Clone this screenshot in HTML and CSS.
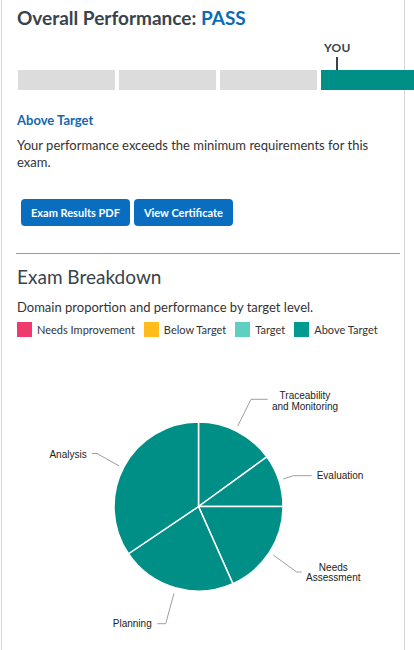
FILE: index.html
```html
<!DOCTYPE html>
<html>
<head>
<meta charset="utf-8">
<link rel="stylesheet" href="styles.css">
</head>
<body>
<div class="card">
  <h1 class="title">Overall Performance: <span class="pass">PASS</span></h1>
  <div class="meter">
    <div class="marker"><span class="you">YOU</span><span class="tick"></span></div>
    <div class="seg"></div>
    <div class="seg"></div>
    <div class="seg"></div>
    <div class="seg on"></div>
  </div>
  <h2 class="level">Above Target</h2>
  <p class="desc">Your performance exceeds the minimum requirements for this exam.</p>
  <div class="actions">
    <button class="btn">Exam Results PDF</button>
    <button class="btn">View Certificate</button>
  </div>
  <hr class="rule">
  <h2 class="section">Exam Breakdown</h2>
  <p class="sub">Domain proportion and performance by target level.</p>
  <ul class="legend">
    <li><span class="sw ni"></span>Needs Improvement</li>
    <li><span class="sw bt"></span>Below Target</li>
    <li><span class="sw tg"></span>Target</li>
    <li><span class="sw at"></span>Above Target</li>
  </ul>
  <svg class="chart" width="404" height="300" viewBox="0 0 404 300">
    <g class="slices">
      <path d="M197.5 156.5 L197.5 72 A84.5 84.5 0 0 1 265.86 106.83 Z"/>
      <path d="M197.5 156.5 L265.86 106.83 A84.5 84.5 0 0 1 282 156.5 Z"/>
      <path d="M197.5 156.5 L282 156.5 A84.5 84.5 0 0 1 231.87 233.69 Z"/>
      <path d="M197.5 156.5 L231.87 233.69 A84.5 84.5 0 0 1 127.45 203.75 Z"/>
      <path d="M197.5 156.5 L127.45 203.75 A84.5 84.5 0 0 1 197.5 72 Z"/>
    </g>
    <g class="leaders">
      <polyline points="236.7,76 250,49.3 266.7,49.3"/>
      <polyline points="91,103.5 96,103.5 118.3,116"/>
      <polyline points="282.3,129 292.3,125.7 310.7,125.7"/>
      <polyline points="272.3,205 295.7,222 300.7,222"/>
      <polyline points="156.3,273.7 164.7,273.7 173,243.3"/>
    </g>
    <g class="labels">
      <text x="304" y="48.5" text-anchor="middle">Traceability</text>
      <text x="304" y="60" text-anchor="middle">and Monitoring</text>
      <text x="85.7" y="107.5" text-anchor="end">Analysis</text>
      <text x="315.7" y="129.3">Evaluation</text>
      <text x="332.3" y="220.5" text-anchor="middle">Needs</text>
      <text x="332.3" y="231.3" text-anchor="middle">Assessment</text>
      <text x="150.7" y="276.5" text-anchor="end">Planning</text>
    </g>
  </svg>
</div>
</body>
</html>
```
FILE: styles.css
```css
html, body {
  margin: 0;
  padding: 0;
  background: #fff;
}
body {
  font-family: Lato, "Open Sans", sans-serif;
  color: #333;
  overflow: hidden;
}
.card {
  margin-left: 1px;
  width: 404px;
  box-sizing: border-box;
  min-height: 650px;
  border-left: 1px solid #d6d6d6;
  border-right: 1px solid #d6d6d6;
  padding: 6px 15px 0 15px;
}
.title {
  margin: 0;
  font-size: 19px;
  line-height: 24px;
  font-weight: 700;
  color: #39434b;
}
.pass { color: #0b6cb5; }
.meter {
  display: grid;
  grid-template-columns: 97px 97px 97px 97px;
  grid-template-rows: auto 20px;
  column-gap: 4px;
  margin: 11px 0 0 1px;
  width: 400px;
}
.marker {
  grid-column: 4;
  grid-row: 1;
  display: flex;
  flex-direction: column;
  align-items: flex-start;
  margin-left: 3px;
}
.you {
  font-size: 12px;
  font-weight: 700;
  line-height: 14px;
  color: #39434b;
  letter-spacing: 0.3px;
}
.tick {
  width: 2px;
  height: 13px;
  margin: 2px 0 0 12px;
  background: #39434b;
}
.seg { grid-row: 2; background: #dcdcdc; }
.seg.on { background: #008f86; }
.level {
  margin: 22px 0 0;
  font-size: 13px;
  line-height: 16px;
  font-weight: 700;
  color: #1467ad;
}
.desc {
  margin: 9px 0 0;
  font-size: 13px;
  line-height: 17px;
  color: #333;
}
.actions {
  display: flex;
  gap: 4px;
  margin: 28px 0 0 4px;
}
.btn {
  border: 0;
  border-radius: 4px;
  background: #0a6ec0;
  color: #fff;
  font-family: Lato, "Open Sans", sans-serif;
  font-size: 11px;
  font-weight: 700;
  height: 27px;
  padding: 0 10px;
  margin: 0;
}
.rule {
  border: 0;
  border-top: 1px solid #9a9a9a;
  margin: 27px 0 0 -1px;
  width: 384px;
  height: 0;
}
.section {
  margin: 11px 0 0;
  font-size: 19px;
  line-height: 24px;
  font-weight: 400;
  color: #39434b;
}
.sub {
  margin: 10px 0 0;
  font-size: 13px;
  line-height: 16px;
  color: #333;
}
.legend {
  list-style: none;
  margin: 7px 0 0;
  padding: 0;
  display: flex;
  gap: 9px;
  font-size: 11px;
  line-height: 15px;
  color: #333;
  white-space: nowrap;
}
.legend li {
  display: flex;
  align-items: center;
  gap: 5px;
  flex-shrink: 0;
}
.sw { width: 15px; height: 15px; display: inline-block; flex-shrink: 0; }
.sw.ni { background: #f0396c; }
.sw.bt { background: #ffbc1a; }
.sw.tg { background: #5fcfc2; }
.sw.at { background: #009a8f; }
.chart {
  display: block;
  margin: 13px 0 0 -16px;
}
.slices path {
  fill: #008f86;
  stroke: #fff;
  stroke-width: 1.5;
}
.leaders polyline {
  fill: none;
  stroke: #9e9e9e;
  stroke-width: 1;
}
.labels text {
  font-family: "Liberation Sans", Arial, sans-serif;
  font-size: 10px;
  fill: #222;
}
```
